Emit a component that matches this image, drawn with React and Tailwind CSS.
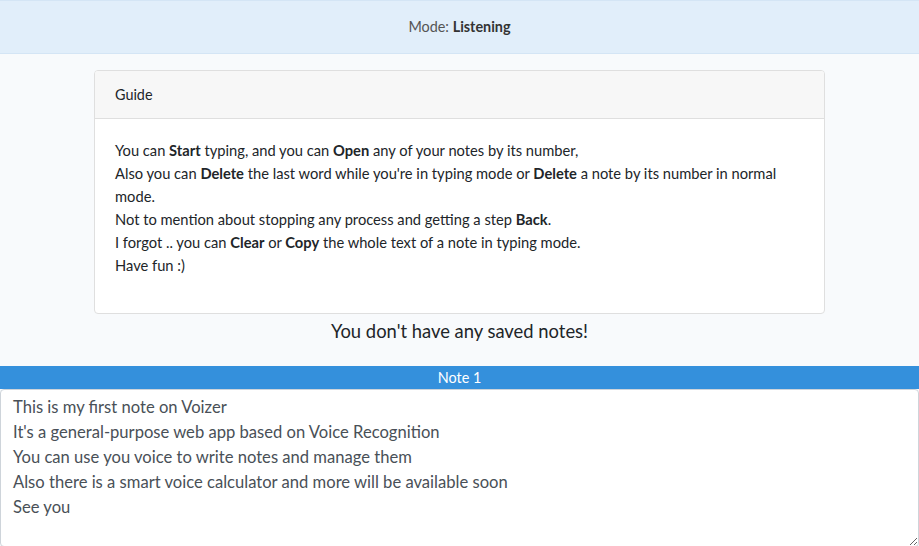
export default function App() {
  const font = { fontFamily: 'Lato, "Noto Sans", sans-serif' };
  return (
    <div className="min-h-[546px] bg-[#f8fafc] text-[#212529] text-[14.4px] leading-[1.6]" style={font}>
      <div className="h-[54px] bg-[#e1eefa] border-t border-b border-[#d4e5f5] flex items-center justify-center text-[#555]">
        <span>Mode: <b className="font-bold text-[#333]">Listening</b></span>
      </div>
      <div className="px-[94px] pt-[16px]">
        <div className="bg-white border border-[#dfdfdf] rounded-[4px] overflow-hidden">
          <div className="bg-[#f7f7f7] border-b border-[#dfdfdf] px-5 py-3">Guide</div>
          <div className="p-5">
            <p className="mb-4 text-[14.7px] leading-[23px]">
              You can <b>Start</b> typing, and you can <b>Open</b> any of your notes by its number,<br />
              Also you can <b>Delete</b> the last word while you're in typing mode or <b>Delete</b> a note by its number in normal mode.<br />
              Not to mention about stopping any process and getting a step <b>Back</b>.<br />
              I forgot .. you can <b>Clear</b> or <b>Copy</b> the whole text of a note in typing mode.<br />
              Have fun :)
            </p>
          </div>
        </div>
      </div>
      <div className="text-center text-[18.4px] leading-[1.2] pt-[6px] h-[52px]">You don't have any saved notes!</div>
      <div className="bg-[#3490dc] text-white text-center h-[23px] leading-[23px]">Note 1</div>
      <textarea
        className="block w-full h-[158px] bg-white border border-[#ced4da] rounded-[4px] px-3 py-[5px] text-[16.6px] leading-[25px] text-[#495057] outline-none"
        style={font}
        defaultValue={"This is my first note on Voizer\nIt's a general-purpose web app based on Voice Recognition\nYou can use you voice to write notes and manage them\nAlso there is a smart voice calculator and more will be available soon\nSee you"}
      />
    </div>
  );
}
